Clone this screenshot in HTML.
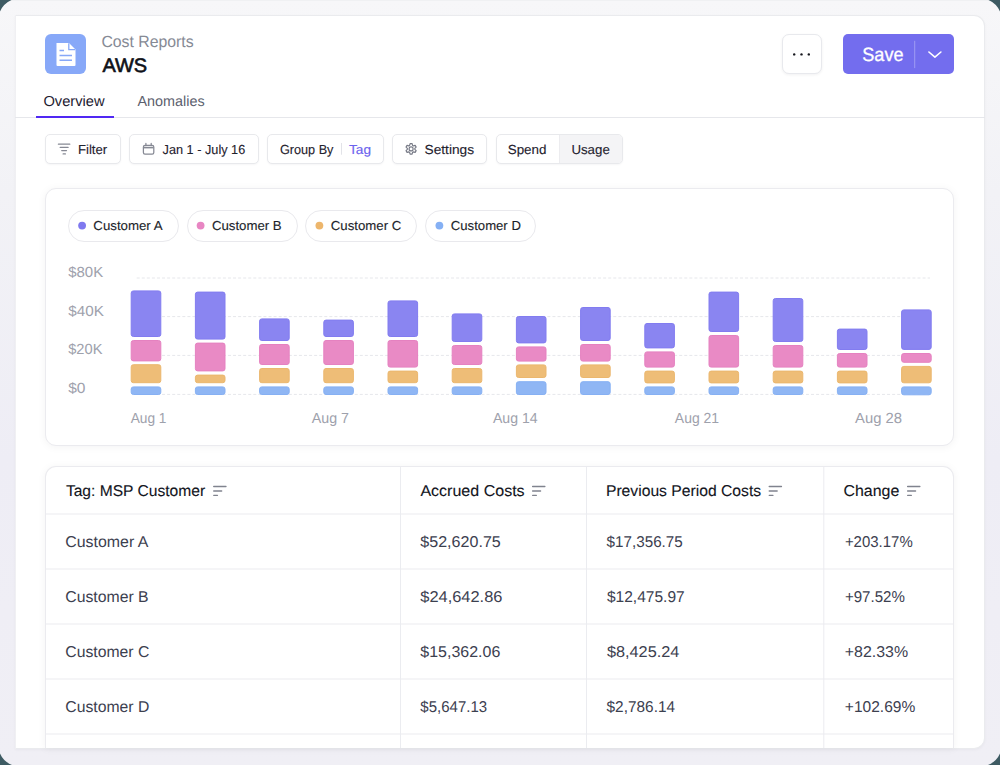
<!DOCTYPE html>
<html><head><meta charset="utf-8"><style>
*{box-sizing:border-box;margin:0;padding:0}
html,body{width:1000px;height:765px;overflow:hidden;background:#f5f5f8}
body{font-family:"Liberation Sans",sans-serif;position:relative}
.frame{position:absolute;left:0;top:0;width:1000px;height:765px;background:linear-gradient(#f7f7f9 0%,#f2f2f6 25%,#eeedf5 60%,#f0eff5 100%);border-top:1px solid #f0f1f3}

.card{position:absolute;left:15px;top:15px;width:970px;height:734px;background:#fff;border:1px solid #eaebee;border-left-color:#f0f0f3;box-shadow:0 1px 3px rgba(20,20,40,0.04);border-radius:0 11px 11px 0;overflow:hidden}
.b{position:absolute}
.btn{position:absolute;border:1px solid #e8e9ec;border-radius:5px;background:#fff;box-shadow:0 1px 2px rgba(20,20,40,0.04)}
.pill{position:absolute;border:1px solid #e9e9ed;border-radius:16px;background:#fff}
.ov{position:absolute;left:0;top:0}
text{font-family:"Liberation Sans",sans-serif;text-rendering:geometricPrecision}
</style></head><body>
<div class="frame"></div>
<div class="card">
  <div class="b" style="left:929px;top:0;width:1px;height:0"></div>
</div>
<div class="b" style="left:15px;top:117px;width:970px;height:1px;background:#e6e7eb"></div>
<div class="b" style="left:36px;top:116px;width:78px;height:2px;background:#5028f3"></div>
<div class="b" style="left:45px;top:34px;width:41px;height:40px;border-radius:6px;background:#87a8f8"></div>
<div class="btn" style="left:782px;top:34px;width:40px;height:40px;border-radius:7px;border-color:#e8e9ed;box-shadow:0 1px 3px rgba(20,20,40,0.06)"></div>
<div class="b" style="left:842.5px;top:34px;width:111.6px;height:40px;border-radius:5px;background:#736dee"></div>
<div class="btn" style="left:45px;top:134px;width:76px;height:30px"></div>
<div class="btn" style="left:129px;top:134px;width:130px;height:30px"></div>
<div class="btn" style="left:267px;top:134px;width:117px;height:30px"></div>
<div class="btn" style="left:392px;top:134px;width:95px;height:30px"></div>
<div class="btn" style="left:496px;top:134px;width:127px;height:30px;overflow:hidden"><div class="b" style="left:62px;top:0;width:64px;height:28px;background:#f4f4f6;border-left:1px solid #ececef"></div></div>
<div class="b" style="left:45px;top:188px;width:909px;height:258px;border:1px solid #ebebef;border-radius:11px;background:#fff;box-shadow:0 1px 8px rgba(20,20,40,0.05)"></div>
<div class="pill" style="left:68px;top:210px;width:111px;height:32px"></div>
<div class="pill" style="left:187px;top:210px;width:111px;height:32px"></div>
<div class="pill" style="left:305px;top:210px;width:112px;height:32px"></div>
<div class="pill" style="left:425px;top:210px;width:111px;height:32px"></div>
<div class="b" style="left:45px;top:466px;width:909px;height:282px;border:1px solid #ebebef;border-bottom:none;border-radius:11px 11px 0 0;background:#fff;box-shadow:0 1px 8px rgba(20,20,40,0.05)"></div>
<svg class="ov" width="1000" height="765" viewBox="0 0 1000 765">
<g class="nt">
  <!-- doc icon -->
  <path d="M56.5 43 H69 L75.5 49.5 V65 a1 1 0 0 1 -1 1 H57.5 a1 1 0 0 1 -1 -1 Z" fill="#fff"/>
  <path d="M68.8 43.2 V49.7 H75.3" fill="none" stroke="#87a8f8" stroke-width="1.3"/>
  <path d="M59.5 50.6 H64 M59.5 55.4 H72 M59.5 60.2 H72" stroke="#87a8f8" stroke-width="1.5"/>
  <!-- dots -->
  <circle cx="794.2" cy="54.4" r="1.2" fill="#15161c"/><circle cx="801.5" cy="54.4" r="1.2" fill="#15161c"/><circle cx="808.8" cy="54.4" r="1.2" fill="#15161c"/>
  <!-- save divider + chevron -->
  <rect x="914.2" y="40.8" width="1" height="27.3" fill="rgba(255,255,255,0.32)"/>
  <path d="M928.9 52 L934.9 57.1 L940.9 52" fill="none" stroke="#fff" stroke-width="1.6" stroke-linecap="round" stroke-linejoin="round"/>
  <!-- filter icon -->
  <path d="M58.4 144.2 H69.8 M60.2 147.4 H68.1 M61.7 150.6 H66.5 M63.1 153.9 H65.4" stroke="#868994" stroke-width="1.25" stroke-linecap="round"/>
  <!-- calendar -->
  <rect x="143.4" y="145.4" width="10.4" height="8.6" rx="1.6" fill="none" stroke="#868994" stroke-width="1.25"/>
  <path d="M143.6 147.6 H153.6" stroke="#868994" stroke-width="1.6"/>
  <path d="M145.9 143.4 V145.6 M151.2 143.4 V145.6" stroke="#868994" stroke-width="1.25" stroke-linecap="round"/>
  <!-- group by divider -->
  <rect x="341" y="143" width="1" height="11.7" fill="#e2e3e8"/>
  <!-- gear -->
  <path d="M409.63 145.45 L410.08 143.65 L412.12 143.65 L412.57 145.45 L413.36 145.91 L415.14 145.39 L416.16 147.16 L414.82 148.44 L414.82 149.36 L416.16 150.64 L415.14 152.41 L413.36 151.89 L412.57 152.35 L412.12 154.15 L410.08 154.15 L409.63 152.35 L408.84 151.89 L407.06 152.41 L406.04 150.64 L407.38 149.36 L407.38 148.44 L406.04 147.16 L407.06 145.39 L408.84 145.91 Z" fill="none" stroke="#777a86" stroke-width="1.15" stroke-linejoin="round"/>
  <circle cx="411.1" cy="148.9" r="2" fill="none" stroke="#777a86" stroke-width="1.15"/>
  <!-- legend dots -->
  <circle cx="82.1" cy="225.6" r="3.9" fill="#7f79ef"/>
  <circle cx="200.6" cy="225.6" r="3.9" fill="#e886c3"/>
  <circle cx="319.4" cy="225.6" r="3.9" fill="#edb66c"/>
  <circle cx="439.4" cy="225.6" r="3.9" fill="#85b0f4"/>
  <!-- grid -->
  <g stroke="#e6e7eb" stroke-width="1" stroke-dasharray="3 2.07">
    <path d="M136.7 278 H930 M136.7 316.6 H930 M136.7 355.4 H930 M136.7 394.4 H930"/>
  </g>
  <rect x="131.20" y="290.90" width="29.6" height="45.60" rx="2.2" fill="#8a85f1" stroke="#827cf0" stroke-width="1"/>
<rect x="131.20" y="340.50" width="29.6" height="20.40" rx="2.2" fill="#e98ac5" stroke="#e581c0" stroke-width="1"/>
<rect x="131.20" y="364.70" width="29.6" height="18.00" rx="2.2" fill="#eebd77" stroke="#ebb76e" stroke-width="1"/>
<rect x="131.20" y="386.90" width="29.6" height="7.60" rx="2.2" fill="#8fb6f4" stroke="#86b0f3" stroke-width="1"/>
<rect x="195.40" y="292.10" width="29.6" height="47.00" rx="2.2" fill="#8a85f1" stroke="#827cf0" stroke-width="1"/>
<rect x="195.40" y="343.10" width="29.6" height="27.80" rx="2.2" fill="#e98ac5" stroke="#e581c0" stroke-width="1"/>
<rect x="195.40" y="375.10" width="29.6" height="7.60" rx="2.2" fill="#eebd77" stroke="#ebb76e" stroke-width="1"/>
<rect x="195.40" y="386.90" width="29.6" height="7.60" rx="2.2" fill="#8fb6f4" stroke="#86b0f3" stroke-width="1"/>
<rect x="259.60" y="318.90" width="29.6" height="21.60" rx="2.2" fill="#8a85f1" stroke="#827cf0" stroke-width="1"/>
<rect x="259.60" y="344.50" width="29.6" height="20.00" rx="2.2" fill="#e98ac5" stroke="#e581c0" stroke-width="1"/>
<rect x="259.60" y="368.50" width="29.6" height="14.20" rx="2.2" fill="#eebd77" stroke="#ebb76e" stroke-width="1"/>
<rect x="259.60" y="386.90" width="29.6" height="7.60" rx="2.2" fill="#8fb6f4" stroke="#86b0f3" stroke-width="1"/>
<rect x="323.80" y="320.10" width="29.6" height="16.40" rx="2.2" fill="#8a85f1" stroke="#827cf0" stroke-width="1"/>
<rect x="323.80" y="340.50" width="29.6" height="24.00" rx="2.2" fill="#e98ac5" stroke="#e581c0" stroke-width="1"/>
<rect x="323.80" y="368.50" width="29.6" height="14.20" rx="2.2" fill="#eebd77" stroke="#ebb76e" stroke-width="1"/>
<rect x="323.80" y="386.90" width="29.6" height="7.60" rx="2.2" fill="#8fb6f4" stroke="#86b0f3" stroke-width="1"/>
<rect x="388.00" y="300.90" width="29.6" height="35.60" rx="2.2" fill="#8a85f1" stroke="#827cf0" stroke-width="1"/>
<rect x="388.00" y="340.50" width="29.6" height="26.60" rx="2.2" fill="#e98ac5" stroke="#e581c0" stroke-width="1"/>
<rect x="388.00" y="371.10" width="29.6" height="11.60" rx="2.2" fill="#eebd77" stroke="#ebb76e" stroke-width="1"/>
<rect x="388.00" y="386.90" width="29.6" height="7.60" rx="2.2" fill="#8fb6f4" stroke="#86b0f3" stroke-width="1"/>
<rect x="452.20" y="313.90" width="29.6" height="27.60" rx="2.2" fill="#8a85f1" stroke="#827cf0" stroke-width="1"/>
<rect x="452.20" y="345.50" width="29.6" height="19.00" rx="2.2" fill="#e98ac5" stroke="#e581c0" stroke-width="1"/>
<rect x="452.20" y="368.50" width="29.6" height="14.20" rx="2.2" fill="#eebd77" stroke="#ebb76e" stroke-width="1"/>
<rect x="452.20" y="386.90" width="29.6" height="7.60" rx="2.2" fill="#8fb6f4" stroke="#86b0f3" stroke-width="1"/>
<rect x="516.40" y="316.50" width="29.6" height="26.40" rx="2.2" fill="#8a85f1" stroke="#827cf0" stroke-width="1"/>
<rect x="516.40" y="346.90" width="29.6" height="14.20" rx="2.2" fill="#e98ac5" stroke="#e581c0" stroke-width="1"/>
<rect x="516.40" y="364.90" width="29.6" height="12.60" rx="2.2" fill="#eebd77" stroke="#ebb76e" stroke-width="1"/>
<rect x="516.40" y="381.70" width="29.6" height="12.80" rx="2.2" fill="#8fb6f4" stroke="#86b0f3" stroke-width="1"/>
<rect x="580.60" y="307.50" width="29.6" height="33.00" rx="2.2" fill="#8a85f1" stroke="#827cf0" stroke-width="1"/>
<rect x="580.60" y="344.50" width="29.6" height="16.60" rx="2.2" fill="#e98ac5" stroke="#e581c0" stroke-width="1"/>
<rect x="580.60" y="364.90" width="29.6" height="12.60" rx="2.2" fill="#eebd77" stroke="#ebb76e" stroke-width="1"/>
<rect x="580.60" y="381.70" width="29.6" height="12.80" rx="2.2" fill="#8fb6f4" stroke="#86b0f3" stroke-width="1"/>
<rect x="644.80" y="323.50" width="29.6" height="24.40" rx="2.2" fill="#8a85f1" stroke="#827cf0" stroke-width="1"/>
<rect x="644.80" y="351.90" width="29.6" height="15.20" rx="2.2" fill="#e98ac5" stroke="#e581c0" stroke-width="1"/>
<rect x="644.80" y="371.10" width="29.6" height="11.80" rx="2.2" fill="#eebd77" stroke="#ebb76e" stroke-width="1"/>
<rect x="644.80" y="386.90" width="29.6" height="7.60" rx="2.2" fill="#8fb6f4" stroke="#86b0f3" stroke-width="1"/>
<rect x="709.00" y="292.10" width="29.6" height="39.40" rx="2.2" fill="#8a85f1" stroke="#827cf0" stroke-width="1"/>
<rect x="709.00" y="335.50" width="29.6" height="31.60" rx="2.2" fill="#e98ac5" stroke="#e581c0" stroke-width="1"/>
<rect x="709.00" y="371.10" width="29.6" height="11.80" rx="2.2" fill="#eebd77" stroke="#ebb76e" stroke-width="1"/>
<rect x="709.00" y="386.90" width="29.6" height="7.60" rx="2.2" fill="#8fb6f4" stroke="#86b0f3" stroke-width="1"/>
<rect x="773.20" y="298.50" width="29.6" height="43.00" rx="2.2" fill="#8a85f1" stroke="#827cf0" stroke-width="1"/>
<rect x="773.20" y="345.50" width="29.6" height="21.60" rx="2.2" fill="#e98ac5" stroke="#e581c0" stroke-width="1"/>
<rect x="773.20" y="371.10" width="29.6" height="11.80" rx="2.2" fill="#eebd77" stroke="#ebb76e" stroke-width="1"/>
<rect x="773.20" y="386.90" width="29.6" height="7.60" rx="2.2" fill="#8fb6f4" stroke="#86b0f3" stroke-width="1"/>
<rect x="837.40" y="329.10" width="29.6" height="20.40" rx="2.2" fill="#8a85f1" stroke="#827cf0" stroke-width="1"/>
<rect x="837.40" y="353.50" width="29.6" height="13.60" rx="2.2" fill="#e98ac5" stroke="#e581c0" stroke-width="1"/>
<rect x="837.40" y="371.10" width="29.6" height="11.80" rx="2.2" fill="#eebd77" stroke="#ebb76e" stroke-width="1"/>
<rect x="837.40" y="386.90" width="29.6" height="7.60" rx="2.2" fill="#8fb6f4" stroke="#86b0f3" stroke-width="1"/>
<rect x="901.60" y="309.90" width="29.6" height="39.50" rx="2.2" fill="#8a85f1" stroke="#827cf0" stroke-width="1"/>
<rect x="901.60" y="353.50" width="29.6" height="8.80" rx="2.2" fill="#e98ac5" stroke="#e581c0" stroke-width="1"/>
<rect x="901.60" y="366.40" width="29.6" height="16.40" rx="2.2" fill="#eebd77" stroke="#ebb76e" stroke-width="1"/>
<rect x="901.60" y="386.90" width="29.6" height="7.90" rx="2.2" fill="#8fb6f4" stroke="#86b0f3" stroke-width="1"/>
  <!-- table lines -->
  <g fill="#ebecf0">
    <rect x="46" y="513.5" width="907" height="1"/>
    <rect x="46" y="568.5" width="907" height="1"/>
    <rect x="46" y="623.5" width="907" height="1"/>
    <rect x="46" y="678.5" width="907" height="1"/>
    <rect x="46" y="733.5" width="907" height="1"/>
    <rect x="400" y="467" width="1" height="281"/>
    <rect x="586" y="467" width="1" height="281"/>
    <rect x="823.3" y="467" width="1" height="281"/>
  </g>
  <path d="M213.7 486.5 H226.0 M213.7 491.0 H221.7 M213.7 495.3 H217.5" stroke="#80838e" stroke-width="1.3" stroke-linecap="round"/>
  <path d="M532.6 486.5 H544.9 M532.6 491.0 H540.6 M532.6 495.3 H536.4" stroke="#80838e" stroke-width="1.3" stroke-linecap="round"/>
  <path d="M769.2 486.5 H781.5 M769.2 491.0 H777.2 M769.2 495.3 H773.0" stroke="#80838e" stroke-width="1.3" stroke-linecap="round"/>
  <path d="M907.6 486.5 H919.9 M907.6 491.0 H915.6 M907.6 495.3 H911.4" stroke="#80838e" stroke-width="1.3" stroke-linecap="round"/>
  <!-- outer corners -->
  <g fill="#3e5b63">
    <path d="M0 0 H11.5 Q3.5 3.5 0 11.5 Z"/>
    <path d="M1000 0 H988.5 Q996.5 3.5 1000 11.5 Z"/>
    <path d="M0 765 H12 Q3.5 761.5 0 753.5 Z"/>
    <path d="M1000 765 H988 Q996.5 761.5 1000 753.5 Z"/>
  </g>
</g>
<g>
<text x="101.38" y="47.00" font-size="16.2" fill="#868a95" textLength="92.31" lengthAdjust="spacingAndGlyphs">Cost Reports</text>
<text x="102.42" y="72.00" font-size="19.5" fill="#0f1118" stroke="#0f1118" stroke-width="0.6" textLength="44.77" lengthAdjust="spacingAndGlyphs">AWS</text>
<text x="43.45" y="106.00" font-size="14.5" fill="#1d2030" textLength="61.19" lengthAdjust="spacingAndGlyphs">Overview</text>
<text x="137.47" y="106.00" font-size="14.5" fill="#5c606e" textLength="67.11" lengthAdjust="spacingAndGlyphs">Anomalies</text>
<text x="77.91" y="154.00" font-size="13.1" fill="#1f222e" stroke="#1f222e" stroke-width="0.12" textLength="29.28" lengthAdjust="spacingAndGlyphs">Filter</text>
<text x="162.61" y="154.00" font-size="13.1" fill="#1f222e" stroke="#1f222e" stroke-width="0.12" textLength="82.60" lengthAdjust="spacingAndGlyphs">Jan 1 - July 16</text>
<text x="279.91" y="154.00" font-size="13.1" fill="#1f222e" stroke="#1f222e" stroke-width="0.12" textLength="53.54" lengthAdjust="spacingAndGlyphs">Group By</text>
<text x="348.97" y="154.00" font-size="13.1" fill="#6b63ee" stroke="#6b63ee" stroke-width="0.12" textLength="22.09" lengthAdjust="spacingAndGlyphs">Tag</text>
<text x="424.54" y="154.00" font-size="13.1" fill="#1f222e" stroke="#1f222e" stroke-width="0.12" textLength="49.51" lengthAdjust="spacingAndGlyphs">Settings</text>
<text x="507.71" y="154.00" font-size="13.1" fill="#1f222e" stroke="#1f222e" stroke-width="0.12" textLength="38.78" lengthAdjust="spacingAndGlyphs">Spend</text>
<text x="571.41" y="154.00" font-size="13.1" fill="#1f222e" stroke="#1f222e" stroke-width="0.12" textLength="38.37" lengthAdjust="spacingAndGlyphs">Usage</text>
<text x="862.30" y="61.00" font-size="19.2" fill="#ffffff" stroke="#ffffff" stroke-width="0.3" textLength="41.26" lengthAdjust="spacingAndGlyphs">Save</text>
<text x="93.33" y="230.00" font-size="13.0" fill="#1b1e2a" stroke="#1b1e2a" stroke-width="0.12" textLength="69.22" lengthAdjust="spacingAndGlyphs">Customer A</text>
<text x="211.93" y="230.00" font-size="13.0" fill="#1b1e2a" stroke="#1b1e2a" stroke-width="0.12" textLength="69.75" lengthAdjust="spacingAndGlyphs">Customer B</text>
<text x="330.82" y="230.00" font-size="13.0" fill="#1b1e2a" stroke="#1b1e2a" stroke-width="0.12" textLength="70.45" lengthAdjust="spacingAndGlyphs">Customer C</text>
<text x="450.82" y="230.00" font-size="13.0" fill="#1b1e2a" stroke="#1b1e2a" stroke-width="0.12" textLength="70.08" lengthAdjust="spacingAndGlyphs">Customer D</text>
<text x="68.23" y="277.00" font-size="14.7" fill="#9ea1ac" textLength="34.94" lengthAdjust="spacingAndGlyphs">$80K</text>
<text x="68.23" y="316.00" font-size="14.7" fill="#9ea1ac" textLength="35.61" lengthAdjust="spacingAndGlyphs">$40K</text>
<text x="68.23" y="354.00" font-size="14.7" fill="#9ea1ac" textLength="34.25" lengthAdjust="spacingAndGlyphs">$20K</text>
<text x="68.22" y="393.00" font-size="14.7" fill="#9ea1ac" textLength="17.28" lengthAdjust="spacingAndGlyphs">$0</text>
<text x="130.67" y="423.00" font-size="14.6" fill="#9ea1ac" textLength="35.84" lengthAdjust="spacingAndGlyphs">Aug 1</text>
<text x="311.76" y="423.00" font-size="14.6" fill="#9ea1ac" textLength="37.22" lengthAdjust="spacingAndGlyphs">Aug 7</text>
<text x="492.93" y="423.00" font-size="14.6" fill="#9ea1ac" textLength="44.62" lengthAdjust="spacingAndGlyphs">Aug 14</text>
<text x="674.84" y="423.00" font-size="14.6" fill="#9ea1ac" textLength="44.29" lengthAdjust="spacingAndGlyphs">Aug 21</text>
<text x="855.12" y="423.00" font-size="14.6" fill="#9ea1ac" textLength="47.01" lengthAdjust="spacingAndGlyphs">Aug 28</text>
<text x="65.89" y="496.00" font-size="15.6" fill="#13151d" stroke="#13151d" stroke-width="0.12" textLength="139.21" lengthAdjust="spacingAndGlyphs">Tag: MSP Customer</text>
<text x="420.42" y="496.00" font-size="15.6" fill="#13151d" stroke="#13151d" stroke-width="0.12" textLength="104.21" lengthAdjust="spacingAndGlyphs">Accrued Costs</text>
<text x="605.95" y="496.00" font-size="15.6" fill="#13151d" stroke="#13151d" stroke-width="0.12" textLength="155.15" lengthAdjust="spacingAndGlyphs">Previous Period Costs</text>
<text x="843.48" y="496.00" font-size="15.6" fill="#13151d" stroke="#13151d" stroke-width="0.12" textLength="55.81" lengthAdjust="spacingAndGlyphs">Change</text>
<text x="65.29" y="547.00" font-size="15.7" fill="#3c404f" textLength="83.10" lengthAdjust="spacingAndGlyphs">Customer A</text>
<text x="420.30" y="547.00" font-size="15.7" fill="#3c404f" textLength="80.47" lengthAdjust="spacingAndGlyphs">$52,620.75</text>
<text x="606.58" y="547.00" font-size="15.7" fill="#3c404f" textLength="76.17" lengthAdjust="spacingAndGlyphs">$17,356.75</text>
<text x="844.89" y="547.00" font-size="15.7" fill="#3c404f" textLength="67.83" lengthAdjust="spacingAndGlyphs">+203.17%</text>
<text x="65.29" y="602.00" font-size="15.7" fill="#3c404f" textLength="83.38" lengthAdjust="spacingAndGlyphs">Customer B</text>
<text x="420.30" y="602.00" font-size="15.7" fill="#3c404f" textLength="82.10" lengthAdjust="spacingAndGlyphs">$24,642.86</text>
<text x="606.95" y="602.00" font-size="15.7" fill="#3c404f" textLength="77.74" lengthAdjust="spacingAndGlyphs">$12,475.97</text>
<text x="844.89" y="602.00" font-size="15.7" fill="#3c404f" textLength="60.00" lengthAdjust="spacingAndGlyphs">+97.52%</text>
<text x="65.29" y="657.00" font-size="15.7" fill="#3c404f" textLength="84.02" lengthAdjust="spacingAndGlyphs">Customer C</text>
<text x="420.32" y="657.00" font-size="15.7" fill="#3c404f" textLength="80.01" lengthAdjust="spacingAndGlyphs">$15,362.06</text>
<text x="606.93" y="657.00" font-size="15.7" fill="#3c404f" textLength="72.43" lengthAdjust="spacingAndGlyphs">$8,425.24</text>
<text x="844.83" y="657.00" font-size="15.7" fill="#3c404f" textLength="63.23" lengthAdjust="spacingAndGlyphs">+82.33%</text>
<text x="65.29" y="712.00" font-size="15.7" fill="#3c404f" textLength="84.05" lengthAdjust="spacingAndGlyphs">Customer D</text>
<text x="420.37" y="712.00" font-size="15.7" fill="#3c404f" textLength="66.81" lengthAdjust="spacingAndGlyphs">$5,647.13</text>
<text x="606.57" y="712.00" font-size="15.7" fill="#3c404f" textLength="68.49" lengthAdjust="spacingAndGlyphs">$2,786.14</text>
<text x="844.85" y="712.00" font-size="15.7" fill="#3c404f" textLength="70.41" lengthAdjust="spacingAndGlyphs">+102.69%</text>
</g>
</svg>
</body></html>
